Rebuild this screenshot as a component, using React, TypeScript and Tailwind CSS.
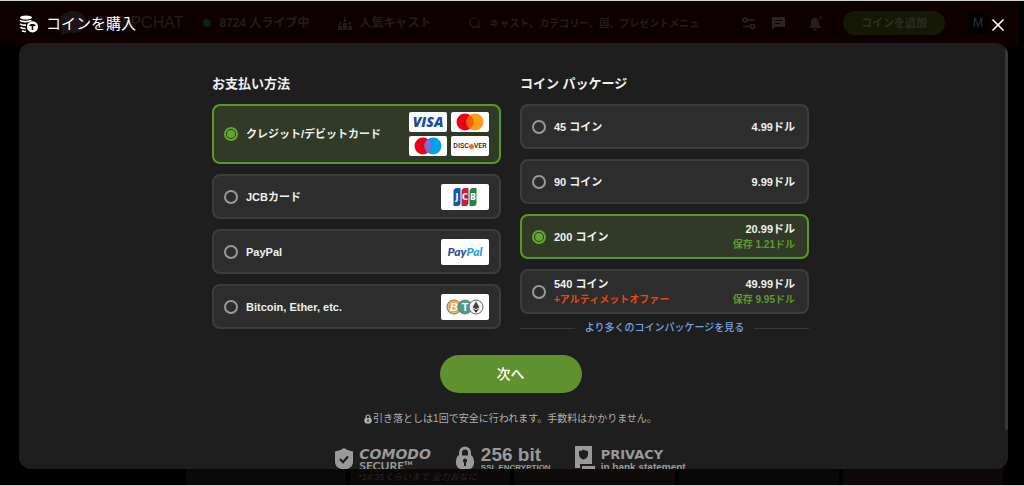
import React, { useState } from 'react';
import { Search, X } from 'lucide-react';

interface PaymentMethod {
  id: string;
  label: string;
  logos: React.ReactNode;
}

interface CoinPackage {
  coins: number;
  price: string;
  saving?: string;
  offer?: string;
}

function VisaLogo() {
  return (
    <span className="flex h-5 w-[38px] items-center justify-center rounded-xs bg-white font-['Open_Sans',sans-serif] text-[14px] leading-none font-extrabold text-[#1a4b9c] italic">
      VISA
    </span>
  );
}

function CirclesLogo({ right, middle }: { right: string; middle: string }) {
  return (
    <span className="flex h-5 w-[38px] items-center justify-center rounded-xs bg-white">
      <svg viewBox="0 0 28 18" className="h-[18px] w-7" aria-hidden="true">
        <circle cx="9" cy="9" r="8.5" fill="#eb001b" />
        <circle cx="19" cy="9" r="8.5" fill={right} />
        <path d="M14 2.1a8.5 8.5 0 0 1 0 13.8a8.5 8.5 0 0 1 0-13.8z" fill={middle} />
      </svg>
    </span>
  );
}

function DiscoverLogo() {
  return (
    <span className="flex h-5 w-[38px] items-center justify-center rounded-xs bg-white font-['Roboto',sans-serif] text-[7px] leading-none font-medium text-[#222]">
      DISC<span className="size-[5px] rounded-full bg-[#f47216]" />VER
    </span>
  );
}

function JcbLogo() {
  return (
    <span className="flex h-[26px] w-12 items-center justify-center rounded-xs bg-white">
      <svg viewBox="0 0 24 18" className="h-[18px] w-6" aria-label="JCB">
        <path d="M4 0h3.500v15a3 3 0 0 1-3 3H.5V3.500A3.500 3.500 0 0 1 4 0z" fill="#1f55a5" />
        <path d="M12 0h3.500v15a3 3 0 0 1-3 3h-4V3.500A3.500 3.500 0 0 1 12 0z" fill="#c4213c" />
        <path d="M20 0h3.500v15a3 3 0 0 1-3 3h-4V3.500A3.500 3.500 0 0 1 20 0z" fill="#1c8a43" />
        <g fill="#fff" fontFamily="DejaVu Sans, sans-serif" fontSize="8" fontWeight="700" textAnchor="middle">
          <text x="4" y="12">J</text>
          <text x="12" y="12">C</text>
          <text x="20" y="12">B</text>
        </g>
      </svg>
    </span>
  );
}

function PayPalLogo() {
  return (
    <span className="flex h-[26px] w-12 items-center justify-center rounded-xs bg-white font-['Lato',sans-serif] text-[12px] leading-none font-black text-[#2b4b8f] italic">
      Pay<span className="text-[#2a9bd8]">Pal</span>
    </span>
  );
}

function CryptoLogo() {
  return (
    <span className="flex h-[26px] w-12 items-center justify-center rounded-xs bg-white">
      <svg viewBox="0 0 38 16" className="h-4 w-[38px]" aria-hidden="true">
        <circle cx="8" cy="8" r="7" fill="#e9a23b" stroke="#777" />
        <circle cx="8" cy="8" r="5.800" fill="none" stroke="#f5d49c" strokeWidth=".6" />
        <text x="8" y="12" fill="#fff" fontFamily="Liberation Sans, sans-serif" fontSize="11" fontWeight="700" fontStyle="italic" textAnchor="middle">B</text>
        <circle cx="19" cy="8" r="7" fill="#4d9c90" stroke="#777" />
        <text x="19" y="12" fill="#fff" fontFamily="Liberation Sans, sans-serif" fontSize="11" fontWeight="700" textAnchor="middle">T</text>
        <circle cx="30" cy="8" r="7" fill="#f4f4f4" stroke="#666" />
        <path d="M30 2.500l3.400 5.700L30 10.200l-3.400-2z" fill="#444" />
        <path d="M26.600 9.200L30 11.200l3.400-2L30 13.800z" fill="#222" />
      </svg>
    </span>
  );
}

const METHODS: PaymentMethod[] = [
  {
    id: 'card',
    label: 'クレジット/デビットカード',
    logos: (
      <span className="grid grid-cols-2 gap-1">
        <VisaLogo />
        <CirclesLogo right="#f79e1b" middle="#ff5f00" />
        <CirclesLogo right="#00a2e5" middle="#7375cf" />
        <DiscoverLogo />
      </span>
    ),
  },
  { id: 'jcb', label: 'JCBカード', logos: <JcbLogo /> },
  { id: 'paypal', label: 'PayPal', logos: <PayPalLogo /> },
  { id: 'crypto', label: 'Bitcoin, Ether, etc.', logos: <CryptoLogo /> },
];

const PACKAGES: CoinPackage[] = [
  { coins: 45, price: '4.99ドル' },
  { coins: 90, price: '9.99ドル' },
  { coins: 200, price: '20.99ドル', saving: '保存 1.21ドル' },
  { coins: 540, price: '49.99ドル', saving: '保存 9.95ドル', offer: '+アルティメットオファー' },
];

const OPTION = 'flex cursor-pointer items-center gap-2 rounded-lg border-2 pl-2.5 text-[11px] leading-4 font-bold text-[#f0f0f0]';
const OPTION_ON = 'border-[#5c962a] bg-[#303a26]';
const OPTION_OFF = 'border-[#3d3d3d] bg-[#2d2d2d]';
const RADIO =
  'grid size-3.5 shrink-0 appearance-none place-content-center rounded-full border-2 border-[#999] checked:border-[#66a52e] checked:before:size-2 checked:before:rounded-full checked:before:bg-[#66a52e]';

function CoinsIcon() {
  return (
    <svg viewBox="0 0 20 18" className="h-[18px] w-5" fill="none" aria-hidden="true">
      <ellipse cx="7" cy="2.500" rx="6" ry="2.100" fill="#fff" />
      <path d="M1 5.200c1.500 1.600 7 2 11.500.4M1 8.700c1.200 1.200 3.500 1.500 6 1.400M1.500 12.300c1.200 1 3 1.300 5 1.200M3 15.800c1 .6 2.500.8 4 .6" stroke="#fff" strokeWidth="1.600" />
      <circle cx="13.500" cy="11.800" r="5.600" fill="#fff" />
      <path d="M10.200 10.600c.5-2 6.100-2 6.600 0c-1 .9-1.800.5-2.500.4v4h-1.600v-4c-.7.1-1.500.5-2.500-.4z" fill="#140404" />
    </svg>
  );
}

function LockIcon({ className }: { className: string }) {
  return (
    <svg viewBox="0 0 20 24" className={className} aria-hidden="true">
      <path d="M5.500 11V6.500a4.500 4.500 0 0 1 9 0V11" fill="none" stroke="currentColor" strokeWidth="3" />
      <path d="M3 9.500h14a10 10 0 0 1 0 12.500q-7 3.500-14 0a10 10 0 0 1 0-12.500z" fill="currentColor" />
      <path d="M10 12.500a2.200 2.200 0 0 1 1 4.100V20H9v-3.400a2.200 2.200 0 0 1 1-4.100z" fill="#1e1e1e" />
    </svg>
  );
}

// The site behind the dialog, already dimmed
function SiteBackdrop() {
  return (
    <div className="flex flex-1 flex-col justify-between" aria-hidden="true">
      <div className="mr-[5px] flex h-11 items-center bg-[#0f0000] pl-[60px] text-[12px] font-bold text-[#241c1a]">
        <svg viewBox="0 0 26 24" className="w-[26px]" fill="#1a1414">
          <path d="M13 0c7 0 13 4.500 13 11s-5 11-12 11c-2 0-3-.2-5-.8L1 24l2-6C1 16 0 14 0 11C0 4.500 6 0 13 0z" />
        </svg>
        <span className="ml-2 text-[16px] font-normal">STRIPCHAT</span>
        <span className="ml-5 size-2 rounded-full bg-[#10230a]" />
        <span className="ml-2 whitespace-nowrap text-[#211e19]">8724 人ライブ中</span>
        <svg viewBox="0 0 14 14" className="ml-7 w-3.5" fill="#241c1a">
          <path d="M5 7h4v7H5zM0 10h4v4H0zM10 10h4v4h-4zM6 3h2v3H6zM1 6h2v3H1zM11 6h2v3h-2zM7 0l1 2H6z" />
        </svg>
        <span className="ml-2 whitespace-nowrap">人気キャスト</span>
        <Search className="ml-9 size-3.5 shrink-0" />
        <span className="ml-2 flex-1 overflow-hidden text-[10px] whitespace-nowrap">キャスト、カテゴリー、国、プレゼントメニュ</span>
        <div className="flex items-center">
          <svg viewBox="0 0 14 14" className="w-3.5" fill="none" stroke="#2a2523" strokeWidth="1.500">
            <circle cx="3" cy="4" r="2" />
            <circle cx="10.500" cy="10.500" r="2" />
            <path d="M5 4h8M1 10.500h7.500" />
          </svg>
          <svg viewBox="0 0 13 13" className="ml-4 w-[13px]" fill="#2a2523">
            <path fillRule="evenodd" d="M0 0h13v10H3l-3 3zM3 3v1h7V3zM3 6v1h5V6z" />
          </svg>
          <svg viewBox="0 0 14 15" className="ml-6 w-3.5" fill="#241f1e">
            <path d="M6 2c3 0 4 2 4 5s1 3 2 5H0c1-2 2-2 2-5s1-5 4-5zM4 13h4c0 2-4 2-4 0z" />
            <circle cx="12" cy="2" r="2" fill="#2a0b08" />
          </svg>
          <span className="ml-5 rounded-full bg-[#161806] px-[18px] py-1 text-[11px] leading-4 whitespace-nowrap text-[#2d2d22]">コインを追加</span>
          <span className="mr-[30px] ml-[22px] flex size-[22px] items-center justify-center rounded-full bg-black font-normal text-[#333]">M</span>
        </div>
      </div>
      <div className="mr-[21px] ml-[186px] grid h-7 grid-cols-5 items-end gap-1 overflow-hidden text-[9px] leading-4 text-[#2a2625] italic">
        <span className="h-full bg-[#0b0908]" />
        <span className="bg-[#0b0807] pl-2 whitespace-nowrap">*14:35くらいまで 全力おなに</span>
        <span className="h-full bg-[#0e0a09]" />
        <span className="h-full bg-[#090807]" />
        <span className="h-full bg-[#0f0808]" />
      </div>
    </div>
  );
}

export default function App() {
  const [method, setMethod] = useState('card');
  const [coins, setCoins] = useState(200);

  return (
    <div className="relative flex h-screen flex-col overflow-hidden border-y border-[#d0d0d0] bg-black font-['Liberation_Sans','Noto_Sans_CJK_JP',sans-serif]">
      <SiteBackdrop />

      <div role="dialog" aria-labelledby="buy-title" className="absolute inset-0 flex flex-col pr-4 pb-4 pl-[19px]">
        <header className="flex h-[42px] shrink-0 items-center gap-[7px] pt-1 text-white">
          <CoinsIcon />
          <h1 id="buy-title" className="flex-1 text-[15px] leading-6 font-normal">コインを購入</h1>
          <button type="button" aria-label="閉じる" className="mt-0.5">
            <X className="size-5" strokeWidth={2} />
          </button>
        </header>

        <main className="relative min-h-0 flex-1 overflow-hidden rounded-xl bg-[#1e1e1e]">
          <div className="absolute top-1.5 right-0 h-[381px] w-[3px] rounded-sm bg-[#383838]" />
          <form
            className="h-full overflow-y-auto pt-[31px] pr-1.5 [scrollbar-width:none]"
            onSubmit={e => e.preventDefault()}
          >
            <div className="mx-auto grid max-w-[597px] grid-cols-2 gap-[19px]">
              <section>
                <h2 className="mb-2.5 text-[13px] leading-5 font-bold text-[#f0f0f0]">お支払い方法</h2>
                <div className="flex flex-col gap-2.5">
                  {METHODS.map(m => (
                    <label
                      key={m.id}
                      className={`${OPTION} pr-2.5 ${m.id === 'card' ? 'h-[60px]' : 'h-[45px]'} ${method === m.id ? OPTION_ON : OPTION_OFF}`}
                    >
                      <input type="radio" name="method" className={RADIO} checked={method === m.id} onChange={() => setMethod(m.id)} />
                      <span className="flex-1">{m.label}</span>
                      {m.logos}
                    </label>
                  ))}
                </div>
              </section>

              <section>
                <h2 className="mb-2.5 text-[13px] leading-5 font-bold text-[#f0f0f0]">コイン パッケージ</h2>
                <div className="flex flex-col gap-2.5">
                  {PACKAGES.map(p => (
                    <label key={p.coins} className={`${OPTION} h-[45px] pr-3 ${coins === p.coins ? OPTION_ON : OPTION_OFF}`}>
                      <input type="radio" name="package" className={RADIO} checked={coins === p.coins} onChange={() => setCoins(p.coins)} />
                      <span className="flex flex-1 flex-col">
                        <span>{p.coins} コイン</span>
                        {p.offer && <span className="text-[10px] text-[#e8470f]">{p.offer}</span>}
                      </span>
                      <span className="flex flex-col text-right">
                        <span>{p.price}</span>
                        {p.saving && <span className="text-[10px] text-[#5f9a2c]">{p.saving}</span>}
                      </span>
                    </label>
                  ))}
                </div>
                <div className="mt-1.5 flex items-center gap-2.5">
                  <span className="h-px flex-1 bg-[#383838]" />
                  <a href="#packages" className="text-[10px] leading-4 font-medium text-[#7ba3e0]">より多くのコインパッケージを見る</a>
                  <span className="h-px flex-1 bg-[#383838]" />
                </div>
              </section>
            </div>

            <div className="mt-[19px] flex flex-col items-center">
              <button type="submit" className="h-[38px] w-[142px] rounded-full bg-[#5f912e] text-[14px] font-medium text-white">次へ</button>
              <p className="mt-[18px] flex items-center gap-px text-[10px] leading-4 text-[#b0b0b0]">
                <LockIcon className="h-2.5 w-2" />
                引き落としは1回で安全に行われます。手数料はかかりません。
              </p>
            </div>

            <ul className="mt-[19px] flex items-start justify-center gap-6 pb-6 font-bold text-[#999]">
              <li className="flex gap-1.5">
                <svg viewBox="0 0 18 22" className="mt-0.5 h-[22px] w-[18px]" aria-hidden="true">
                  <path d="M9 0q4 3 9 3.500v10.500q0 6-9 8q-9-2-9-8V3.500Q5 3 9 0z" fill="currentColor" />
                  <path d="M5 11l3 3.200L13 8.500" fill="none" stroke="#1e1e1e" strokeWidth="2.200" />
                </svg>
                <span className="flex flex-col">
                  <span className="font-['DejaVu_Sans',sans-serif] text-[14px] leading-4 italic">COMODO</span>
                  <span className="font-['Lato',sans-serif] text-[12px] leading-2">SECURE™</span>
                </span>
              </li>
              <li className="flex gap-1.5">
                <LockIcon className="h-6 w-5" />
                <span className="flex flex-col">
                  <span className="text-[19px] leading-[18px]">256 bit</span>
                  <span className="text-[8px] leading-2">SSL ENCRYPTION</span>
                </span>
              </li>
              <li className="flex gap-1.5">
                <svg viewBox="0 0 20 24" className="h-6 w-5" aria-hidden="true">
                  <path d="M0 0h17v18H0z" fill="currentColor" />
                  <path d="M8.500 3.500q2 1.500 4.500 1.500v3.500q0 3.500-4.500 5q-4.500-1.500-4.500-5V5q2.500 0 4.500-1.500z" fill="#1e1e1e" />
                  <path d="M0 18h5v4H0zM7 20h13v3H7z" fill="currentColor" />
                </svg>
                <span className="flex flex-col">
                  <span className="font-['DejaVu_Sans',sans-serif] text-[13px] leading-[18px]">PRIVACY</span>
                  <span className="text-[10px] leading-2">in bank statement</span>
                </span>
              </li>
            </ul>
          </form>
        </main>
      </div>
    </div>
  );
}
